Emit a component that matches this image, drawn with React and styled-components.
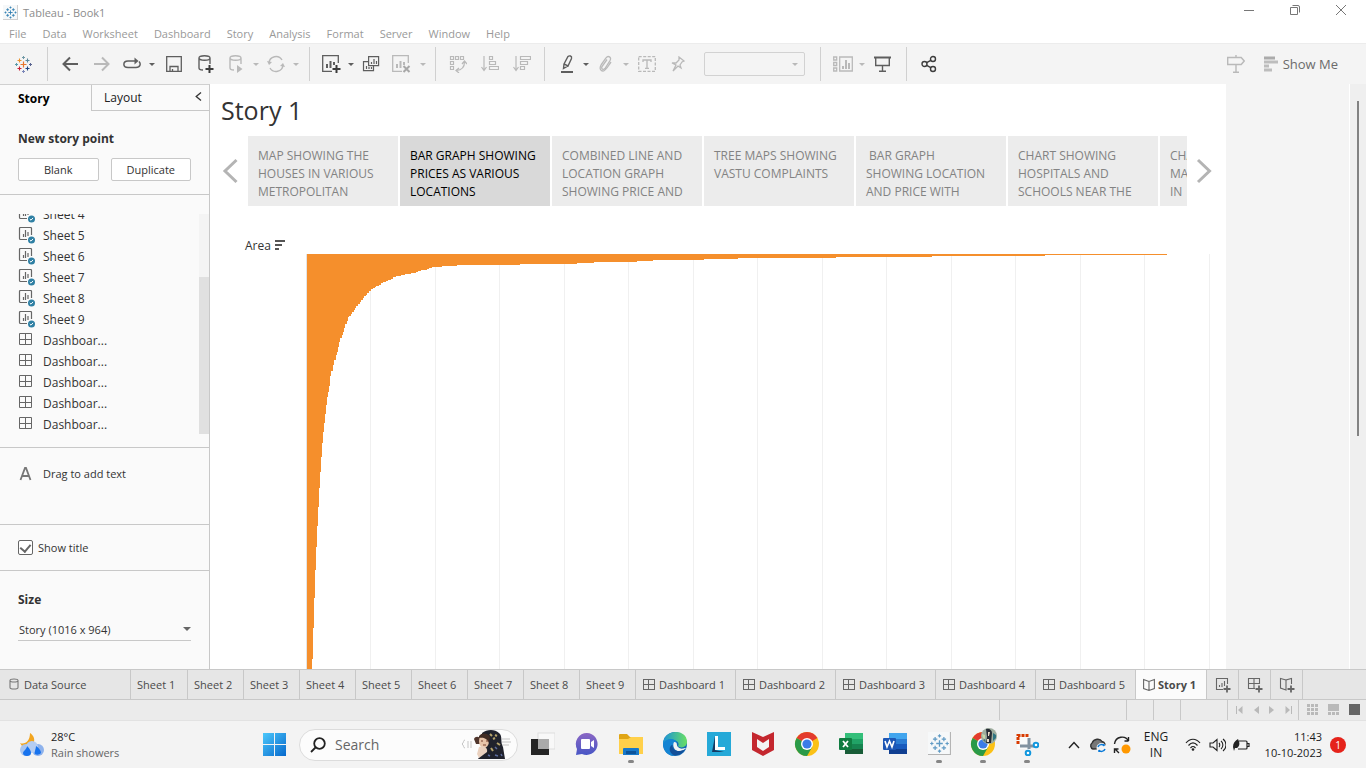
import React from "react";
import styled, { createGlobalStyle, css } from "styled-components";

const GlobalStyle = createGlobalStyle`
  * { box-sizing: border-box; }
  html, body { margin: 0; padding: 0; }
  body { font-family: "Open Sans", "Noto Sans", sans-serif; font-size: 12px; color: #333; background: #f4f4f4; }
  button, select, input { font-family: inherit; margin: 0; }
  button { border: 0; background: none; padding: 0; color: inherit; }
  svg { display: block; flex: none; }
`;

const Shell = styled.div`
  display: flex;
  flex-direction: column;
  height: 100vh;
  overflow: hidden;
`;

/* ---------- window chrome ---------- */

const TitleBar = styled.header`
  display: flex;
  align-items: center;
  height: 24px;
  padding-left: 3px;
  gap: 5px;
  background: #fff;
  color: #8c8c8c;
  font-size: 11px;
`;

const AppTitle = styled.span`
  flex: 1;
`;

const WindowButton = styled.button`
  display: flex;
  align-items: center;
  justify-content: center;
  width: 46px;
  height: 24px;
  padding-bottom: 4px;
`;

const WindowButtons = styled.div`
  display: flex;
  padding-right: 2px;
`;

const MenuBar = styled.nav`
  display: flex;
  align-items: center;
  gap: 16px;
  height: 19px;
  padding-left: 9px;
  background: #fff;
`;

const MenuItem = styled.button`
  color: #999;
  font-size: 11px;
  line-height: 19px;
`;

/* ---------- toolbar ---------- */

const Toolbar = styled.div`
  display: flex;
  align-items: center;
  height: 41px;
  flex: none;
  background: #f4f4f4;
  border-top: 1px solid #ececec;
`;

const ToolGroup = styled.div`
  display: flex;
  align-items: center;
  height: 34px;
  padding-left: ${(p) => p.$start || 6}px;
  padding-right: ${(p) => p.$end || 6}px;
  ${(p) => !p.$last && css`border-right: 1px solid #d0d0d0;`}
`;

const Tool = styled.button`
  display: flex;
  align-items: center;
  justify-content: center;
  width: ${(p) => p.$w || 32}px;
  height: 32px;
  color: ${(p) => (p.$off ? "#b9b9b9" : "#5e5e5e")};
`;

const Caret = styled.span`
  display: flex;
  justify-content: center;
  width: ${(p) => p.$w || 12}px;
  color: ${(p) => (p.$off ? "#b9b9b9" : "#5e5e5e")};
  &::after {
    content: "";
    border: 3px solid transparent;
    border-top-color: currentColor;
    border-bottom: 0;
  }
`;

const FitBox = styled.div`
  display: flex;
  align-items: center;
  margin-left: 11px;
  width: 101px;
  height: 24px;
  border: 1px solid #d2d2d2;
  border-radius: 2px;
`;

const FitSelect = styled.select`
  flex: 1;
  height: 22px;
  appearance: none;
  border: 0;
  background: transparent;
`;

const ToolbarEnd = styled.div`
  display: flex;
  align-items: center;
  margin-left: auto;
  padding-right: 28px;
  gap: 12px;
`;

const ShowMe = styled.button`
  display: flex;
  align-items: center;
  gap: 5px;
  color: #6b6b6b;
  font-size: 13px;
`;

/* ---------- side panel ---------- */

const Workspace = styled.div`
  display: flex;
  flex: 1;
  min-height: 0;
`;

const Side = styled.aside`
  display: flex;
  flex-direction: column;
  flex: 0 0 210px;
  background: #fafafa;
  border-right: 1px solid #c8c8c8;
  border-top: 1px solid #d0d0d0;
`;

const SideTabs = styled.div`
  display: flex;
  height: 26px;
  flex: none;
`;

const StoryTab = styled.button`
  width: 91px;
  padding-left: 18px;
  text-align: left;
  font-size: 12px;
  font-weight: 700;
  color: #000;
`;

const LayoutTab = styled.div`
  display: flex;
  flex: 1;
  align-items: center;
  justify-content: space-between;
  padding: 0 7px 0 12px;
  border-left: 1px solid #c8c8c8;
  border-bottom: 1px solid #c8c8c8;
`;

const TabButton = styled.button`
  font-size: 12px;
  color: #222;
`;

const Section = styled.section`
  flex: none;
  height: ${(p) => p.$h}px;
  padding: ${(p) => p.$pad || "0 18px"};
  ${(p) => !p.$last && css`border-bottom: 1px solid #c8c8c8;`}
`;

const Heading = styled.h2`
  margin: 0;
  font-size: 12px;
  font-weight: 700;
  line-height: 18px;
  color: #333;
`;

const ButtonPair = styled.div`
  display: flex;
  gap: 12px;
  margin-top: 10px;
`;

const PlainButton = styled.button`
  flex: 1;
  height: 23px;
  border: 1px solid #c8c8c8;
  border-radius: 2px;
  background: #fff;
  font-size: 11px;
`;

const SheetList = styled.div`
  display: flex;
  height: 221px;
  overflow: hidden;
`;

const Rows = styled.ul`
  display: flex;
  flex: 1;
  flex-direction: column;
  justify-content: flex-end;
  margin: 0;
  padding: 0 0 0 18px;
  list-style: none;
`;

const Row = styled.li`
  display: flex;
  flex: none;
  align-items: center;
  gap: 8px;
  height: 21px;
  font-size: 12px;
`;

const ListTrack = styled.div`
  display: flex;
  align-items: flex-end;
  width: 10px;
  height: 220px;
  background: #f4f4f4;
`;

const ListThumb = styled.div`
  width: 10px;
  height: 157px;
  background: #e0e0e0;
`;

const TextObject = styled.div`
  display: flex;
  align-items: center;
  gap: 10px;
  font-size: 11px;
  line-height: 18px;
`;

const CheckLabel = styled.label`
  display: flex;
  align-items: center;
  gap: 5px;
  font-size: 11px;
  line-height: 15px;
`;

const CheckBox = styled.input`
  display: grid;
  place-items: center;
  appearance: none;
  width: 15px;
  height: 15px;
  border: 1px solid #666;
  border-radius: 2px;
  background: #fff;
  &:checked::after {
    content: "";
    width: 5px;
    height: 8px;
    margin-bottom: 2px;
    border: solid #666;
    border-width: 0 2px 2px 0;
    transform: rotate(40deg);
  }
`;

const SizeField = styled.div`
  display: flex;
  align-items: center;
  margin-top: 10px;
  padding-bottom: 1px;
  border-bottom: 1px solid #c8c8c8;
`;

const SizeSelect = styled.select`
  flex: 1;
  height: 20px;
  padding: 0 0 0 1px;
  appearance: none;
  border: 0;
  background: transparent;
  color: #333;
  font-size: 11px;
`;

const SizeCaret = styled.span`
  width: 8px;
  border: 4px solid transparent;
  border-top-color: #666;
  border-bottom: 0;
`;

/* ---------- story canvas ---------- */

const Canvas = styled.main`
  flex: 0 1 1016px;
  min-width: 0;
  overflow: hidden;
  background: #fff;
`;

const StoryTitle = styled.h1`
  margin: 0;
  padding-left: 11px;
  font-size: 25px;
  font-weight: 400;
  line-height: 52px;
  color: #333;
`;

const Navigator = styled.div`
  display: flex;
  height: 70px;
`;

const NavArrow = styled.button`
  display: flex;
  flex: none;
  align-items: center;
  width: ${(p) => (p.$next ? 39 : 38)}px;
  padding-left: ${(p) => (p.$next ? 9 : 12)}px;
`;

const Points = styled.div`
  display: flex;
  flex: 1;
  gap: 2px;
  min-width: 0;
  overflow: hidden;
`;

const Point = styled.button`
  display: flex;
  align-items: flex-start;
  flex: 0 0 150px;
  height: 70px;
  padding: 11px 0 5px 10px;
  overflow: hidden;
  background: ${(p) => (p.$active ? "#d9d9d9" : "#ececec")};
  color: ${(p) => (p.$active ? "#000" : "#838383")};
  font-size: 12px;
  line-height: 18px;
  text-align: left;
  white-space: pre;
`;

const FieldLabel = styled.div`
  display: flex;
  align-items: center;
  gap: 4px;
  margin-top: 31px;
  padding-left: 35px;
  font-size: 12px;
  line-height: 17px;
`;

const ChartArea = styled.div`
  padding-left: 96px;
`;

const Gutter = styled.div`
  flex: 1;
  background: #f4f4f4;
  border-right: 1px solid #fff;
`;

const ScrollTrack = styled.div`
  width: 16px;
  padding: 17px 7px 0;
  background: #efefef;
`;

const ScrollThumb = styled.div`
  width: 2px;
  height: 335px;
  background: #828282;
`;

/* ---------- sheet tabs and status ---------- */

const SheetTabs = styled.div`
  display: flex;
  flex: none;
  height: 31px;
  background: #e6e6e6;
  border-top: 1px solid #c8c8c8;
  border-bottom: 1px solid #c8c8c8;
`;

const SheetTab = styled.button`
  display: flex;
  flex: none;
  align-items: center;
  gap: ${(p) => p.$gap || 5}px;
  width: ${(p) => p.$w}px;
  padding-left: ${(p) => p.$pad || 6}px;
  border-right: 1px solid #c8c8c8;
  background: ${(p) => (p.$active ? "#fbfbfb" : "transparent")};
  font-size: 11px;
  font-weight: ${(p) => (p.$active ? 700 : 400)};
  color: #4a4a4a;
  white-space: nowrap;
`;

const StatusBar = styled.div`
  display: flex;
  justify-content: flex-end;
  flex: none;
  height: 21px;
  background: #ebebeb;
  border-bottom: 1px solid #e2e2e2;
`;

const StatusCell = styled.div`
  display: flex;
  align-items: center;
  justify-content: space-between;
  width: ${(p) => p.$w}px;
  padding: 0 6px 1px 8px;
  border-left: 1px solid #c8c8c8;
`;

/* ---------- taskbar ---------- */

const Taskbar = styled.footer`
  display: flex;
  flex: none;
  align-items: center;
  height: 47px;
  background: #f3f3f3;
`;

const Weather = styled.div`
  display: flex;
  flex: 0 0 252px;
  align-items: center;
  gap: 6px;
  padding-left: 19px;
  font-size: 11px;
  line-height: 16px;
`;

const Temp = styled.div`
  color: #1b1b1b;
`;

const Sky = styled.div`
  color: #666;
`;

const SearchBox = styled.label`
  display: flex;
  align-items: center;
  gap: 9px;
  width: 219px;
  height: 32px;
  margin: 0 1px 0 3px;
  padding: 0 3px 0 10px;
  border: 1px solid #dcdcdc;
  border-radius: 16px;
  background: #fcfcfc;
`;

const SearchInput = styled.input`
  flex: 1;
  min-width: 0;
  padding: 0;
  border: 0;
  background: transparent;
  font-size: 14px;
  &::placeholder { color: #666; opacity: 1; }
`;

const AppIcon = styled.button`
  position: relative;
  display: flex;
  align-items: center;
  justify-content: center;
  width: 44px;
  height: 47px;
  padding-bottom: 2px;
  ${(p) => p.$running && css`
    &::after {
      content: "";
      position: absolute;
      bottom: 5px;
      left: 19px;
      width: 6px;
      height: 3px;
      border-radius: 2px;
      background: #868686;
    }
  `}
`;

const Apps = styled.div`
  display: flex;
  padding-left: 2px;
`;

const Tray = styled.div`
  display: flex;
  align-items: center;
  margin-left: auto;
  padding-right: 20px;
`;

const TrayButton = styled.button`
  display: flex;
  align-items: center;
  justify-content: center;
  width: 24px;
  height: 32px;
`;

const Language = styled.div`
  width: 47px;
  padding-right: 3px;
  text-align: center;
  font-size: 12px;
  line-height: 16px;
  color: #1b1b1b;
`;

const Clock = styled.div`
  width: 69px;
  margin-right: 8px;
  text-align: right;
  font-size: 11px;
  line-height: 16px;
  color: #1b1b1b;
`;

const Badge = styled.div`
  width: 16px;
  height: 16px;
  border-radius: 8px;
  background: #e5231b;
  color: #fff;
  font-size: 10px;
  line-height: 16px;
  text-align: center;
`;

/* ---------- drawings ---------- */

const Svg = ({ w = 20, h = 20, children, ...rest }) => (
  <svg width={w} height={h} viewBox={`0 0 ${w} ${h}`} fill="none" stroke="currentColor" strokeWidth="1.4" aria-hidden="true" {...rest}>
    {children}
  </svg>
);

const PLUSES = [
  [8.5, 8.5, 3, "#e8762c", 1.2],
  [4.5, 4.5, 2, "#eb9129", 1.1],
  [12.5, 4.5, 2, "#59879b", 1.1],
  [4.5, 12.5, 2, "#c72035", 1.1],
  [12.5, 12.5, 2, "#1f447e", 1.1],
  [8.5, 1.5, 1.5, "#7099a6", 1],
  [8.5, 15.5, 1.5, "#7b86b8", 1],
  [1.5, 8.5, 1.5, "#5b9aa9", 1],
  [15.5, 8.5, 1.5, "#5b6591", 1],
];

function TableauMark({ size = 17, color, plate }) {
  return (
    <svg width={size} height={size} viewBox={plate ? "-2 -2 21 21" : "0 0 17 17"} aria-hidden="true">
      {plate && <rect x="-2" y="-2" width="21" height="21" fill="#f6f8f9" />}
      {plate && <path d="M-2 18.500H18.500V-2" fill="none" stroke="#b4b4b4" />}
      {PLUSES.map(([x, y, r, c, w]) => (
        <path key={`${x}-${y}`} d={`M${x - r} ${y}h${2 * r}M${x} ${y - r}v${2 * r}`} stroke={color || c} strokeWidth={w} />
      ))}
    </svg>
  );
}

const Db = () => <path d="M2 4c0-3 11-3 11 0s-11 3-11 0v10c0 1.500 1 2 4 2M13 4v6" />;

const BarsBox = () => (
  <>
    <path d="M17.300 9V1.700H1.700v15.600H11" strokeWidth="1.300" />
    <path d="M6 14V10M9.500 14V7M13 11V8" strokeWidth="2" />
  </>
);

const PlusMark = ({ x, y, r = 4 }) => (
  <path d={`M${x - r} ${y}h${2 * r}M${x} ${y - r}v${2 * r}`} stroke="#3c3c3c" strokeWidth="2" />
);

const GridIcon = () => (
  <Svg w={12} h={12} stroke="#666" strokeWidth="1" shapeRendering="crispEdges">
    <path d="M.5 .5h11v10h-11zM5.500 .5v10M.5 5.500h11" />
  </Svg>
);

const SheetIcon = () => (
  <Svg w={17} h={17} stroke="#666" strokeWidth="1">
    <path d="M13.500 8V1.500q0-1-1-1h-10q-1 0-1 1v10q0 1 1 1H9" strokeWidth="1.200" />
    <path d="M5.500 10V7M7.500 10V3M10 9V5" strokeWidth="1.200" />
    <circle cx="13.500" cy="13" r="3.500" fill="#2e7fa3" stroke="none" />
    <path d="M11.800 13l1.200 1.200 2-2.300" stroke="#fff" />
  </Svg>
);

const BookIcon = () => (
  <Svg w={12} h={14} stroke="#666" strokeWidth="1.100">
    <path d="M6 3.500L.6 1.500v9l5.400 2 5.400-2v-9zV12.500" />
  </Svg>
);

const ChromeIcon = ({ face }) => (
  <svg width="28" height="32" viewBox="0 0 28 32" aria-hidden="true">
    <circle cx="14" cy="16" r="12" fill="#fbc116" />
    <path d="M14 16L3.600 10A12 12 0 0 1 24.400 10z" fill="#e33b2e" />
    <path d="M14 16L3.600 10A12 12 0 0 0 14 28l5.200-9z" fill="#2a9a48" />
    <circle cx="14" cy="16" r="6" fill="#fff" />
    <circle cx="14" cy="16" r="4.600" fill="#3a7ce8" />
    {face && (
      <g>
        <circle cx="20" cy="8" r="8" fill="#9fae9f" />
        <path d="M17 1c3-1 6 1 6 4l-1 10h-5l1-6z" fill="#262c35" />
        <path d="M19 4h2l-1 4h-1zM18 11h2v3h-2z" fill="#eadcc7" />
        <path d="M13 6l3 1v4l-2-1z" fill="#c9d8a8" />
        <path d="M24 5l3 2v3l-3 3z" fill="#2f7482" />
        <path d="M14 12l2-1 1 4z" fill="#3d6f86" />
      </g>
    )}
  </svg>
);

const OfficeIcon = ({ colors, tile, children }) => (
  <svg width="24" height="24" viewBox="0 0 24 24" aria-hidden="true">
    <rect x="6" y="1" width="18" height="6" fill={colors[0]} />
    <rect x="6" y="7" width="18" height="5" fill={colors[1]} />
    <rect x="6" y="12" width="18" height="5" fill={colors[2]} />
    <rect x="6" y="17" width="18" height="5" fill={colors[3]} />
    <rect x="0" y="6" width="13" height="12" rx="1" fill={tile} />
    {children}
  </svg>
);

const GRID_X = [64, 129, 193, 258, 322, 387, 451, 516, 580, 645, 709, 774, 838, 903];

/* Right edge of the bars, as [x, bottom] steps from the widest bar down. */
const STEPS = [
  [861, 1], [739, 2], [626, 3], [530, 4], [432, 5], [398, 6], [347, 7], [331, 8], [288, 9], [271, 10], [214, 11],
  [151, 12], [136, 13], [126, 14], [123, 15], [121, 16], [115, 17], [112, 18], [110, 19], [105, 20],
  [99, 21], [95, 22], [90, 23], [87, 25], [85, 26], [82, 27], [80, 28], [77, 29], [75, 31], [73, 32],
  [70, 33], [69, 34], [67, 35], [65, 37], [63, 39], [61, 41], [60, 42], [58, 44], [57, 46], [55, 48],
  [54, 50], [52, 52], [50, 54], [49, 56], [48, 58], [46, 60], [45, 62], [43, 63], [42, 67], [41, 70],
  [39, 74], [38, 78], [37, 81], [36, 84], [34, 88], [33, 93], [32, 98], [31, 101], [30, 106], [28, 111],
  [27, 117], [25, 122], [24, 132], [23, 138], [22, 143], [21, 151], [20, 160], [19, 169], [18, 178], [17, 189],
  [16, 203], [15, 218], [14, 234], [13, 253], [12, 272], [11, 293], [10, 316], [9, 344], [8, 374], [7, 405], [6, 712],
];

const barPath = `M1 0${STEPS.map(([x, y]) => `H${x}V${y}`).join("")}H1z`;

const MENUS = ["File", "Data", "Worksheet", "Dashboard", "Story", "Analysis", "Format", "Server", "Window", "Help"];
const SHEETS = [4, 5, 6, 7, 8, 9];
const DASHBOARDS = [1, 2, 3, 4, 5];
const POINTS = [
  "MAP SHOWING THE\nHOUSES IN VARIOUS\nMETROPOLITAN",
  "BAR GRAPH SHOWING\nPRICES AS VARIOUS\nLOCATIONS",
  "COMBINED LINE AND\nLOCATION GRAPH\nSHOWING PRICE AND",
  "TREE MAPS SHOWING\nVASTU COMPLAINTS",
  " BAR GRAPH\nSHOWING LOCATION\nAND PRICE WITH",
  "CHART SHOWING\nHOSPITALS AND\nSCHOOLS NEAR THE",
  "CHART\nMAPS\nIN",
];

function TopToolbar() {
  return (
    <Toolbar>
      <ToolGroup $start={8} $end={8}>
        <Tool $w={31} aria-label="Start page"><TableauMark size={17} /></Tool>
      </ToolGroup>
      <ToolGroup $end={7}>
        <Tool aria-label="Undo"><Svg w={16} h={16} strokeWidth="2"><path d="M16 8H1.500M8 1.500L1.500 8 8 14.500" /></Svg></Tool>
        <Tool $off aria-label="Redo"><Svg w={16} h={16} strokeWidth="2"><path d="M0 8h14.500M8 1.500L14.500 8 8 14.500" /></Svg></Tool>
        <Tool $w={28} aria-label="Replay"><Svg w={18} h={14} strokeWidth="1.500"><path d="M14 4H5C-.5 4-.5 10.500 5 10.500h8c4.500 0 5-4 3-6" /><path d="M11.500.500l4 3.500-4 3.500z" fill="currentColor" stroke="none" /></Svg></Tool>
        <Caret />
        <Tool aria-label="Save"><Svg w={16} h={16} strokeWidth="1.300"><path d="M.7.7h14.600v14.600H.7zM4 15v-4.500h8V15M6.500 15v-2" /></Svg></Tool>
        <Tool aria-label="New data source"><Svg w={18} h={20}><Db /><PlusMark x={12.5} y={15} /></Svg></Tool>
        <Tool $w={28} $off aria-label="Pause updates"><Svg w={16} h={20}><Db /><path d="M9 11l5.500 4-5.500 4z" fill="currentColor" stroke="none" /></Svg></Tool>
        <Caret $off />
        <Tool $w={28} $off aria-label="Refresh"><Svg w={18} h={18}><path d="M2 8a7 7 0 0 1 13-3M16 10a7 7 0 0 1-13 3" /><path d="M0 6l2 4 3-3zM18 12l-2-4-3 3z" fill="currentColor" stroke="none" /></Svg></Tool>
        <Caret $off />
      </ToolGroup>
      <ToolGroup $start={7}>
        <Tool $w={28} aria-label="New worksheet"><Svg w={20} h={20}><BarsBox /><PlusMark x={15.5} y={15} /></Svg></Tool>
        <Caret />
        <Tool $w={28} aria-label="Duplicate sheet"><Svg w={18} h={18} strokeWidth="1.200"><path d="M6.600 1.600h10v9h-10zM6.500 6.600h-5v9h10v-5M9.500 9V7M12 9V4M14.500 9V6M4.500 14v-3M7 14v-2M9.500 14v-2" /></Svg></Tool>
        <Tool $off aria-label="Clear sheet"><Svg w={20} h={20}><BarsBox /><path d="M12.500 12l6 6M18.500 12l-6 6" stroke="#a8a8a8" strokeWidth="2" /></Svg></Tool>
        <Caret $off />
      </ToolGroup>
      <ToolGroup>
        <Tool $off aria-label="Swap"><Svg w={18} h={18} strokeWidth="1.200"><path d="M1.500 1.500h3v3h-3zM6.500 1.500h3v3h-3zM11.500 1.500h3v3h-3zM1.500 6.500h3v3h-3zM1.500 11.500h3v3h-3zM15.500 7c0 5-2 8-8 8.500M13 9l2.500-3L18 9M10 13l-3 2.500 3 2.500" /></Svg></Tool>
        <Tool $off aria-label="Sort ascending"><Svg w={18} h={18} strokeWidth="1.200"><path d="M3 1v14M.5 12L3 15.500 5.500 12M8.500 1.500h3v3h-3zM8.500 6.500h6v3h-6zM8.500 11.500h9v3h-9z" /></Svg></Tool>
        <Tool $off aria-label="Sort descending"><Svg w={18} h={18} strokeWidth="1.200"><path d="M3 1v14M.5 12L3 15.500 5.500 12M7.500 1.500h10v3h-10zM7.500 6.500h7v3h-7zM7.500 11.500h4v3h-4z" /></Svg></Tool>
      </ToolGroup>
      <ToolGroup $start={8} $end={15}>
        <Tool $w={28} aria-label="Highlight"><Svg w={14} h={20}><path d="M4 10L8 2.500q1-1 2.500-.5t1 2.500L8 12zM4 10l-.5 4.500L8 12" /><path d="M1 18h12" strokeWidth="2" /></Svg></Tool>
        <Caret $w={10} />
        <Tool $w={30} $off aria-label="Group members"><Svg w={14} h={18} strokeWidth="1.300"><path d="M2 10l5-7c2-3 6-1 4 2.500L6 13.500c-2 2-4 0-3-2l5-7M2 10c-2 4 0 6 2 6 3 0 5-5 8-9" /></Svg></Tool>
        <Caret $w={10} $off />
        <Tool $off aria-label="Show mark labels"><Svg w={18} h={16} strokeWidth="1.300"><path d="M.7.700h16.600v14.600H.7z" strokeDasharray="3 1.500" /><path d="M5 6V4h8v2M9 4v8M7 12.300h4" /></Svg></Tool>
        <Tool $w={30} $off aria-label="Fix axes"><Svg w={14} h={16} strokeWidth="1.300"><path d="M8 1l5 4-2 1-2 3 1 3-3-2-5 5 3-6-4-2h4l3-3z" /></Svg></Tool>
        <FitBox>
          <FitSelect aria-label="Fit" disabled><option></option></FitSelect>
          <Caret $w={18} $off />
        </FitBox>
      </ToolGroup>
      <ToolGroup $start={8} $end={9}>
        <Tool $w={28} $off aria-label="Show cards"><Svg w={20} h={16} strokeWidth="1.300"><path d="M.7 1h3v3h-3zM.7 6.500h3v3h-3zM.7 12h3v3h-3zM6.700 1h12.600v14H6.700z" /><path d="M10 13v-3M13 13V4M16 13V7" strokeWidth="2" /></Svg></Tool>
        <Caret $w={10} $off />
        <Tool $w={30} aria-label="Presentation mode"><Svg w={17} h={16}><path d="M0 1.500h17" strokeWidth="2" /><path d="M1.700 2v7.500h13.600V2M8.500 10v5M5 15.300h7" /></Svg></Tool>
      </ToolGroup>
      <ToolGroup $last>
        <Tool aria-label="Share"><Svg w={16} h={18} stroke="#3d3d3d"><circle cx="3.500" cy="9" r="2.500" /><circle cx="12" cy="4" r="2.500" /><circle cx="12" cy="14" r="2.500" /><path d="M5.700 7.600L9.800 5.300M5.700 10.400l4.100 2.300" /></Svg></Tool>
      </ToolGroup>
      <ToolbarEnd>
        <Tool $off aria-label="Guide"><Svg w={18} h={18}><path d="M.7 2.500h13.500l3 3.500-3 3.500H.7zM9 0v2.500M9 9.500v8M6 17.300h6" /></Svg></Tool>
        <ShowMe>
          <Svg w={14} h={16} stroke="#bdbdbd" strokeWidth="3"><path d="M0 2h11" stroke="#ababab" /><path d="M0 6h14M0 10h5M0 14h8" /></Svg>
          Show Me
        </ShowMe>
      </ToolbarEnd>
    </Toolbar>
  );
}

function SidePanel() {
  return (
    <Side>
      <SideTabs>
        <StoryTab>Story</StoryTab>
        <LayoutTab>
          <TabButton>Layout</TabButton>
          <button aria-label="Collapse"><Svg w={7} h={11} strokeWidth="1.300"><path d="M6 .5L1.200 4.500 6 8.500" /></Svg></button>
        </LayoutTab>
      </SideTabs>
      <Section $h={84} $pad="19px 18px 0">
        <Heading>New story point</Heading>
        <ButtonPair>
          <PlainButton>Blank</PlainButton>
          <PlainButton>Duplicate</PlainButton>
        </ButtonPair>
      </Section>
      <Section $h={253} $pad="19px 0 0">
        <SheetList>
          <Rows>
            {SHEETS.map((n) => <Row key={n}><SheetIcon />Sheet {n}</Row>)}
            {DASHBOARDS.map((n) => <Row key={n}><Svg w={17} h={17} stroke="#666" strokeWidth="1"><path d="M1.500 1.500h12v11h-12zM7.500 1.500v11M1.500 7.500h12" /></Svg>Dashboar...</Row>)}
          </Rows>
          <ListTrack><ListThumb /></ListTrack>
        </SheetList>
      </Section>
      <Section $h={77} $pad="17px 18px 0">
        <TextObject>
          <Svg w={15} h={16} strokeWidth="1.800" stroke="#777"><path d="M2.500 14L7 2h1l4.500 12M4.200 10h6.600" /></Svg>
          Drag to add text
        </TextObject>
      </Section>
      <Section $h={46} $pad="15px 18px 0">
        <CheckLabel><CheckBox type="checkbox" defaultChecked />Show title</CheckLabel>
      </Section>
      <Section $h={98} $last $pad="20px 18px 0">
        <Heading as="label" htmlFor="size">Size</Heading>
        <SizeField>
          <SizeSelect id="size"><option>Story (1016 x 964)</option></SizeSelect>
          <SizeCaret />
        </SizeField>
      </Section>
    </Side>
  );
}

function StoryCanvas() {
  return (
    <Canvas>
      <StoryTitle>Story 1</StoryTitle>
      <Navigator>
        <NavArrow aria-label="Previous"><Svg w={16} h={26} stroke="#b4b4b4" strokeWidth="3"><path d="M14.500 2L3 13l11.500 11" /></Svg></NavArrow>
        <Points>
          {POINTS.map((text, i) => <Point key={text} $active={i === 1}>{text}</Point>)}
        </Points>
        <NavArrow $next aria-label="Next"><Svg w={16} h={26} stroke="#b4b4b4" strokeWidth="3"><path d="M2 2l11.500 11L2 24" /></Svg></NavArrow>
      </Navigator>
      <FieldLabel>
        Area
        <Svg w={11} h={12} stroke="#555" strokeWidth="2"><path d="M0 1h10M0 5h7M0 9h4" /></Svg>
      </FieldLabel>
      <ChartArea>
        <svg width="904" height="712" viewBox="0 0 904 712" shapeRendering="crispEdges" role="img" aria-label="Area bars">
          {GRID_X.map((x) => <path key={x} d={`M${x}.5 0V712`} stroke="#f0f0f0" />)}
          <path d="M.5 0V712" stroke="#e4e4e4" />
          <path d={barPath} fill="#f58f2c" />
        </svg>
      </ChartArea>
    </Canvas>
  );
}

function TabStrip() {
  return (
    <SheetTabs>
      <SheetTab $w={131} $pad={9}>
        <Svg w={10} h={14} stroke="#777" strokeWidth="1.100"><path d="M1 2.500c0-2 8-2 8 0s-8 2-8 0v7c0 2 8 2 8 0v-7" /></Svg>
        Data Source
      </SheetTab>
      {[1, 2, 3, 4, 5, 6, 7, 8, 9].map((n) => <SheetTab key={n} $w={n === 1 ? 57 : 56}>Sheet {n}</SheetTab>)}
      {DASHBOARDS.map((n) => <SheetTab key={n} $w={100} $pad={7} $gap={4}><GridIcon />Dashboard {n}</SheetTab>)}
      <SheetTab $w={71} $pad={7} $gap={3} $active><BookIcon />Story 1</SheetTab>
      <SheetTab $w={32} $pad={8} aria-label="New worksheet">
        <Svg w={16} h={16} stroke="#666" strokeWidth="1.100"><path d="M12.500 7V1.500h-11v11H8M4.500 10V8M7 10V6M9.500 9V4" /><path d="M12 8.500v7M8.500 12h7" strokeWidth="1.800" /></Svg>
      </SheetTab>
      <SheetTab $w={32} $pad={8} aria-label="New dashboard">
        <Svg w={16} h={16} stroke="#666" strokeWidth="1.100"><path d="M12.500 7V1.500h-11v10H8M7 1.500v10M1.500 6.500h11" /><path d="M12 8.500v7M8.500 12h7" strokeWidth="1.800" /></Svg>
      </SheetTab>
      <SheetTab $w={32} $pad={8} aria-label="New story">
        <Svg w={16} h={16} stroke="#666" strokeWidth="1.100"><path d="M7 3L1.500 1.500V11L7 13V3l5.500-1.500V7" /><path d="M12 8.500v7M8.500 12h7" strokeWidth="1.800" /></Svg>
      </SheetTab>
    </SheetTabs>
  );
}

function Status() {
  return (
    <StatusBar>
      <StatusCell $w={127} />
      <StatusCell $w={27} />
      <StatusCell $w={27} />
      <StatusCell $w={47} />
      <StatusCell $w={71}>
        <Svg w={7} h={8} fill="#b9b9b9" stroke="none"><path d="M0 0h1v8H0zM6.500 0v8L2 4z" /></Svg>
        <Svg w={5} h={8} fill="#b9b9b9" stroke="none"><path d="M5 0v8L0 4z" /></Svg>
        <Svg w={5} h={8} fill="#b9b9b9" stroke="none"><path d="M0 0v8l5-4z" /></Svg>
        <Svg w={7} h={8} fill="#b9b9b9" stroke="none"><path d="M6 0h1v8H6zM.5 0v8L5 4z" /></Svg>
      </StatusCell>
      <StatusCell $w={68}>
        <Svg w={11} h={11} fill="#b9b9b9" stroke="none"><path d="M0 0h3v3H0zM4 0h3v3H4zM8 0h3v3H8zM0 4h3v3H0zM4 4h3v3H4zM8 4h3v3H8zM0 8h3v3H0zM4 8h3v3H4zM8 8h3v3H8z" /></Svg>
        <Svg w={11} h={11} fill="#b9b9b9" stroke="none"><path d="M0 0h11v7H0zM0 8h3v3H0zM4 8h3v3H4zM8 8h3v3H8z" /></Svg>
        <Svg w={11} h={11} fill="#666" stroke="none"><rect width="11" height="11" /></Svg>
      </StatusCell>
    </StatusBar>
  );
}

function WindowsBar() {
  return (
    <Taskbar>
      <Weather>
        <svg width="26" height="26" viewBox="0 0 26 26" aria-hidden="true">
          <path d="M11 1c3 2 5 5 4 9l-6 4H3L1 11c5 2 10-2 10-10z" fill="#f2a51f" />
          <circle cx="7" cy="18" r="6" fill="#a8c5f0" /><circle cx="19" cy="18" r="6" fill="#8eb2ec" /><circle cx="13" cy="15" r="6" fill="#b5cdf2" />
          <path d="M8 14c3 3 4 5 4 7a4 3 0 0 1-8 0c0-2 4-4 4-7zM17 14c4 3 5 5 5 7a4 3 0 0 1-6 1c-1-2 1-5 1-8z" fill="#1773ee" />
        </svg>
        <div><Temp>28°C</Temp><Sky>Rain showers</Sky></div>
      </Weather>
      <AppIcon aria-label="Start">
        <svg width="23" height="24" viewBox="0 0 23 24"><defs><linearGradient id="win" x1="0" y1="0" x2="1" y2="1"><stop offset="0" stopColor="#4cc8fb" /><stop offset="1" stopColor="#0668cc" /></linearGradient></defs><path d="M0 1h11v11H0zM12 1h11v11H12zM0 13h11v11H0zM12 13h11v11H12z" fill="url(#win)" /></svg>
      </AppIcon>
      <SearchBox>
        <Svg w={16} h={16} stroke="#222" strokeWidth="1.800"><circle cx="9.500" cy="6.500" r="5.300" /><path d="M5.500 10.500L1 15" /></Svg>
        <SearchInput placeholder="Search" aria-label="Search" />
        <svg width="54" height="30" viewBox="0 0 54 30" aria-hidden="true">
          <path d="M5 10c-2 0-1 3-3 4 2 1 1 4 3 4M8 11v7M11 11v7M42 9h8M42 12h9M42 15h7" fill="none" stroke="#c4c4c4" />
          <path d="M22 3c5-4 13-4 17 0 4 3 1 9 4 14l2 12H18l5-7z" fill="#20222c" />
          <path d="M14 9c1-3 5-3 7 0l-1 5h-4z" fill="#50362d" />
          <ellipse cx="24" cy="11" rx="5" ry="7" fill="#e8c4a9" />
          <path d="M19 17c5-2 9 1 8 5l-8 6-2-4z" fill="#ead1bf" />
          <path d="M19 6c3-4 9-3 11 1l-1 6c-2-5-6-6-10-5z" fill="#422d25" />
          <path d="M21 11h2M26 11h2M23 15h3" stroke="#79402f" />
          <path d="M30 4l2 2M35 5l2 1M33 9l2-1M37 13l3 2M31 18l2 3" stroke="#b5a36a" strokeWidth="2" />
          <path d="M35 17l2 2M35 25l3 1M41 24l1 2M28 25l2 1" stroke="#5d6c9d" strokeWidth="1.500" />
        </svg>
      </SearchBox>
      <Apps>
        <AppIcon aria-label="Task view"><svg width="24" height="24" viewBox="0 0 24 24"><rect x="7" y="1" width="17" height="16" fill="#f8f8f8" stroke="#dedede" /><path d="M0 7h18v16H0z" fill="#242424" /><path d="M7 7h11v10H7z" fill="#aaa" /></svg></AppIcon>
        <AppIcon aria-label="Chat"><svg width="24" height="24" viewBox="0 0 24 24"><defs><linearGradient id="chat" x1="0" y1="0" x2="0" y2="1"><stop offset="0" stopColor="#8b67c4" /><stop offset="1" stopColor="#4856c5" /></linearGradient></defs><path d="M12 1a11 11 0 1 1-5 21l-6 1 1-6A11 11 0 0 1 12 1z" fill="url(#chat)" /><rect x="6" y="7" width="9" height="10" rx="1" fill="#fff" /><path d="M16 10l3-2v8l-3-2z" fill="#fff" /></svg></AppIcon>
        <AppIcon $running aria-label="File Explorer"><svg width="24" height="24" viewBox="0 0 24 24"><path d="M0 3q0-1 1-1h7l3 3h13v17H0z" fill="#e0a515" /><path d="M0 7h9l3-2h12v17H0z" fill="#ffd04a" /><path d="M4 17q0-1 1-1h14q1 0 1 1v6H4z" fill="#1878c9" /><path d="M7 19h10v3H7z" fill="#0b539b" /></svg></AppIcon>
        <AppIcon aria-label="Edge"><svg width="24" height="24" viewBox="0 0 24 24"><defs><linearGradient id="edge"><stop stopColor="#1b93d9" /><stop offset="1" stopColor="#69df63" /></linearGradient></defs><circle cx="12" cy="12" r="12" fill="#1269b5" /><path d="M0 12C0-3 24-4 24 10c0 5-6 7-9 4 3-5-7-9-12-3z" fill="url(#edge)" /><path d="M0 12c3-7 14-6 14 0-7-2-8 8-3 12C5 24 0 19 0 12z" fill="#1484d3" /><path d="M11 10c4 0 2 3 4 5 3 3 6 1 8 1-2 3-10 5-12 0-1-2-1-4 0-6z" fill="#f3f3f3" /><path d="M9 13c0 6 8 8 13 4-2 5-9 8-13 5-4-4-2-8 0-9z" fill="#134f99" /></svg></AppIcon>
        <AppIcon aria-label="Lenovo"><svg width="24" height="24" viewBox="0 0 24 24"><rect width="24" height="24" fill="#25a9d8" /><path d="M5 20L8 4v14l9 2z" fill="#143b63" /><path d="M8 4h3v11h7v3H8z" fill="#fff" /></svg></AppIcon>
        <AppIcon aria-label="McAfee"><svg width="24" height="26" viewBox="0 0 24 26"><path d="M1 1l11 5 11-5v18l-11 6-11-6zM6 8v8l6 4 6-4V8l-6 4z" fill="#c4272e" fillRule="evenodd" /></svg></AppIcon>
        <AppIcon aria-label="Chrome"><ChromeIcon /></AppIcon>
        <AppIcon aria-label="Excel"><OfficeIcon colors={["#34bf7a", "#21a366", "#168450", "#185c37"]} tile="#107c41"><path d="M4 9l5 6M9 9l-5 6" stroke="#fff" strokeWidth="1.800" /></OfficeIcon></AppIcon>
        <AppIcon aria-label="Word"><OfficeIcon colors={["#41a5ee", "#2b7cd3", "#185abd", "#103f91"]} tile="#1d56b5"><path d="M2 9l2 6 2.500-6L9 15l2-6" fill="none" stroke="#fff" strokeWidth="1.600" /></OfficeIcon></AppIcon>
        <AppIcon $running aria-label="Tableau"><TableauMark size={23} color="#5f9ac4" plate /></AppIcon>
        <AppIcon $running aria-label="Chrome profile"><ChromeIcon face /></AppIcon>
        <AppIcon $running aria-label="Snipping Tool"><svg width="24" height="24" viewBox="0 0 24 24"><path d="M2 3h12v14H2z" fill="#fafafa" /><path d="M3 12V3.500h11" fill="none" stroke="#d83b01" strokeWidth="3" strokeDasharray="3 1" /><path d="M14 6v11M5 14h14" stroke="#8292a0" strokeWidth="3" /><circle cx="21" cy="13" r="2.300" fill="#fff" stroke="#1297de" strokeWidth="2" /><circle cx="13" cy="21" r="2.300" fill="#fff" stroke="#1297de" strokeWidth="2" /></svg></AppIcon>
      </Apps>
      <Tray>
        <TrayButton aria-label="Hidden icons"><Svg w={12} h={8} stroke="#222"><path d="M1 7l5-5.500L11 7" /></Svg></TrayButton>
        <TrayButton aria-label="OneDrive"><Svg w={18} h={16}><path d="M4 12a3.500 3.500 0 0 1-1-6C5 1.500 11 1 13 4.500c3 .5 4 4 2 7z" fill="#777" stroke="#333" /><circle cx="12.500" cy="11" r="5" fill="#f3f3f3" stroke="none" /><path d="M9 10c1-3 5-3 6-1V7M16 12c-1 3-5 3-6 1v2" stroke="#0879d8" strokeWidth="1.500" /></Svg></TrayButton>
        <TrayButton aria-label="Updates"><Svg w={18} h={18} stroke="#222"><path d="M1.500 8c1-8 11-9 14-3V1M15.500 5h-4M1.500 17v-4h4M2 13l4 4" /><circle cx="13" cy="13" r="4.500" fill="#ff9800" stroke="none" /></Svg></TrayButton>
        <Language>ENG<br />IN</Language>
        <TrayButton aria-label="Wi-Fi"><Svg w={16} h={14} stroke="#222" strokeWidth="1.200"><path d="M1 5c4-5 10-5 14 0M3.500 7.500c3-3.500 6-3.500 9 0M5.500 10c2-2 3-2 5 0" /><circle cx="8" cy="11.500" r="1.300" fill="#222" stroke="none" /></Svg></TrayButton>
        <TrayButton aria-label="Volume"><Svg w={17} h={14} stroke="#222" strokeWidth="1.100"><path d="M1 5v4h3l4 3.500V1.500L4 5zM10 5c1 1 1 3 0 4M12 3c2.500 2 2.500 6 0 8M14 1c4 3 4 9 0 12" /></Svg></TrayButton>
        <TrayButton aria-label="Battery"><Svg w={18} h={14} stroke="#222" strokeWidth="1.200"><path d="M7 3h7q1 0 1 1v6q0 1-1 1H6M15.500 5.500H17v3h-1.500" /><path d="M1 9C1 5 3 3 6 1c2 4 2 7-1 9H3l-1 3z" fill="#222" stroke="none" /></Svg></TrayButton>
        <Clock>11:43<br />10-10-2023</Clock>
        <Badge>1</Badge>
      </Tray>
    </Taskbar>
  );
}

export default function App() {
  return (
    <Shell>
      <GlobalStyle />
      <TitleBar>
        <TableauMark size={15} color="#2a7ab0" plate />
        <AppTitle>Tableau - Book1</AppTitle>
        <WindowButtons>
          <WindowButton aria-label="Minimize"><Svg w={10} h={10} stroke="#777" strokeWidth="1"><path d="M0 5.500h10" /></Svg></WindowButton>
          <WindowButton aria-label="Restore"><Svg w={10} h={10} stroke="#777" strokeWidth="1"><path d="M.5 2.500h7v7h-7zM2.500.500H8q1.500 0 1.500 1.500v5.500" /></Svg></WindowButton>
          <WindowButton aria-label="Close"><Svg w={10} h={10} stroke="#777" strokeWidth="1"><path d="M0 0l10 10M10 0L0 10" /></Svg></WindowButton>
        </WindowButtons>
      </TitleBar>
      <MenuBar>{MENUS.map((m) => <MenuItem key={m}>{m}</MenuItem>)}</MenuBar>
      <TopToolbar />
      <Workspace>
        <SidePanel />
        <StoryCanvas />
        <Gutter />
        <ScrollTrack><ScrollThumb /></ScrollTrack>
      </Workspace>
      <TabStrip />
      <Status />
      <WindowsBar />
    </Shell>
  );
}
